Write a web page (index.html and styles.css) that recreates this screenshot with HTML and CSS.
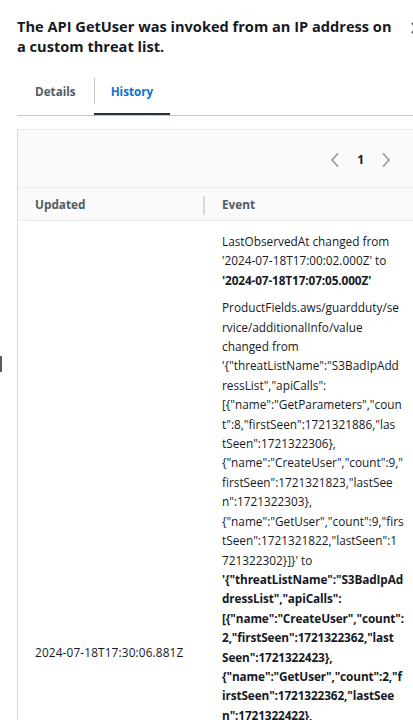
FILE: index.html
```html
<!DOCTYPE html>
<html>
<head>
<meta charset="utf-8">
<link rel="stylesheet" href="styles.css">
</head>
<body>
<div class="edge-handle"></div>
<div class="panel">
  <header class="panel-header">
    <h2 class="title">The API GetUser was invoked from an IP address on<br>a custom threat list.</h2>
    <button class="close" aria-label="Close">
      <svg width="16" height="16" viewBox="0 0 16 16"><path d="M3 3l10 10M13 3L3 13" stroke="#414d5c" stroke-width="2" fill="none"/></svg>
    </button>
  </header>
  <nav class="tabs">
    <div class="tab">Details</div>
    <div class="tab active">History</div>
  </nav>
  <section class="history">
    <div class="pager">
      <svg class="chev" width="10" height="16" viewBox="0 0 10 16"><path d="M8 1.5L2 8l6 6.5" stroke="#8d99a8" stroke-width="1.6" fill="none"/></svg>
      <span class="page">1</span>
      <svg class="chev" width="10" height="16" viewBox="0 0 10 16"><path d="M2 1.5L8 8l-6 6.5" stroke="#8d99a8" stroke-width="1.6" fill="none"/></svg>
    </div>
    <table class="grid">
      <thead>
        <tr><th class="col-updated">Updated</th><th class="col-event"><span class="sep"></span>Event</th></tr>
      </thead>
      <tbody>
        <tr>
          <td class="col-updated">2024-07-18T17:30:06.881Z</td>
          <td class="col-event">
            <p>LastObservedAt changed from<br>'2024-07-18T17:00:02.000Z' to<br><b>'2024-07-18T17:07:05.000Z'</b></p>
            <p>ProductFields.aws/guardduty/se<br>rvice/additionalInfo/value<br>changed from<br>'{"threatListName":"S3BadIpAdd<br>ressList","apiCalls":<br>[{"name":"GetParameters","coun<br>t":8,"firstSeen":1721321886,"las<br>tSeen":1721322306},<br>{"name":"CreateUser","count":9,"<br>firstSeen":1721321823,"lastSee<br>n":1721322303},<br>{"name":"GetUser","count":9,"firs<br>tSeen":1721321822,"lastSeen":1<br>721322302}]}' to<br><b>'{"threatListName":"S3BadIpAd<br>dressList","apiCalls":<br>[{"name":"CreateUser","count":<br>2,"firstSeen":1721322362,"last<br>Seen":1721322423},<br>{"name":"GetUser","count":2,"f<br>irstSeen":1721322362,"lastSee<br>n":1721322422},<br>{"name":"GetParameters","cou<br>nt":2,"firstSeen":1721322363,"la<br>stSeen":1721322421}]}'</b></p>
            <p>ProductFields.aws/guardduty/service/eventFirstSeen changed from '2024-07-18T16:57:01.000Z' to <b>'2024-07-18T17:06:02.000Z'</b></p>
            <p>ProductFields.aws/guardduty/service/eventLastSeen changed from '2024-07-18T17:07:02.000Z' to <b>'2024-07-18T17:30:02.000Z'</b></p>
            <p>ProductFields.aws/guardduty/service/count changed from '26' to <b>'32'</b></p>
            <p>UpdatedAt changed from '2024-07-18T17:07:05.611Z' to <b>'2024-07-18T17:30:06.881Z'</b></p>
          </td>
        </tr>
      </tbody>
    </table>
  </section>
</div>
</body>
</html>
```

FILE: styles.css
```css
html, body {
  margin: 0;
  padding: 0;
  background: #ffffff;
  overflow: hidden;
}
body {
  font-family: "Open Sans", "Noto Sans", sans-serif;
  color: #16191f;
  width: 413px;
}
.edge-handle {
  position: fixed;
  left: 0;
  top: 356px;
  width: 2px;
  height: 16px;
  background: #545b64;
}
.panel {
  padding: 17px 0 0 17px;
}
.panel-header {
  display: flex;
  align-items: flex-start;
}
.title {
  flex: 1;
  margin: 0;
  font-size: 14.6px;
  line-height: 19.5px;
  font-weight: 700;
  padding-right: 14px;
}
.close {
  flex: none;
  margin: 3px -12px 0 0;
  padding: 0;
  border: 0;
  background: none;
  width: 16px;
  height: 16px;
}
.close svg {
  display: block;
}
.tabs {
  display: flex;
  margin-top: 13px;
  border-bottom: 1px solid #c6c6cd;
}
.tab {
  position: relative;
  padding: 12px 18px 14px;
  font-size: 11.7px;
  line-height: 20px;
  font-weight: 700;
  color: #545b64;
}
.tab + .tab::before {
  content: "";
  position: absolute;
  left: 0;
  top: 9px;
  width: 1px;
  height: 26px;
  background: #c6c6cd;
}
.tab.active {
  color: #0972d3;
  padding-left: 17px;
  padding-right: 17px;
}
.tab.active::after {
  content: "";
  position: absolute;
  left: 0;
  right: 0;
  bottom: 0;
  height: 2px;
  background: #232f3e;
}
.history {
  margin-top: 13px;
  width: 406px;
  border-top: 1px solid #eaeded;
  border-left: 1px solid #d5dbdb;
  background: #fafafa;
}
.pager {
  display: flex;
  justify-content: flex-end;
  align-items: center;
  gap: 17px;
  padding: 20px 33px 17px 0;
  height: 20px;
}
.chev {
  display: block;
}
.page {
  font-size: 12px;
  font-weight: 700;
  line-height: 20px;
  color: #16191f;
}
.grid {
  width: 406px;
  border-collapse: collapse;
  table-layout: fixed;
  font-size: 11.8px;
}
.grid th {
  position: relative;
  text-align: left;
  font-weight: 700;
  color: #545b64;
  line-height: 20px;
  padding: 6px 18px 6px;
  border-top: 1px solid #eaeded;
  border-bottom: 1px solid #eaeded;
}
.grid th.col-updated,
.grid td.col-updated {
  width: 152px;
  padding-left: 17px;
  padding-right: 17px;
}
.sep {
  position: absolute;
  left: -1px;
  top: 8px;
  width: 2px;
  height: 19px;
  background: #d5dbdb;
}
.grid td {
  background: #ffffff;
  padding: 11px 18px 0;
  line-height: 19.4px;
  vertical-align: middle;
}
.grid td.col-updated {
  letter-spacing: 0.15px;
  padding-bottom: 14px;
}
.grid td.col-event {
  vertical-align: top;
  overflow-wrap: anywhere;
}
.grid td b {
  letter-spacing: -0.12px;
}
.grid td p {
  margin: 0 0 8px;
}
.grid td p:last-child {
  margin-bottom: 0;
}
```
